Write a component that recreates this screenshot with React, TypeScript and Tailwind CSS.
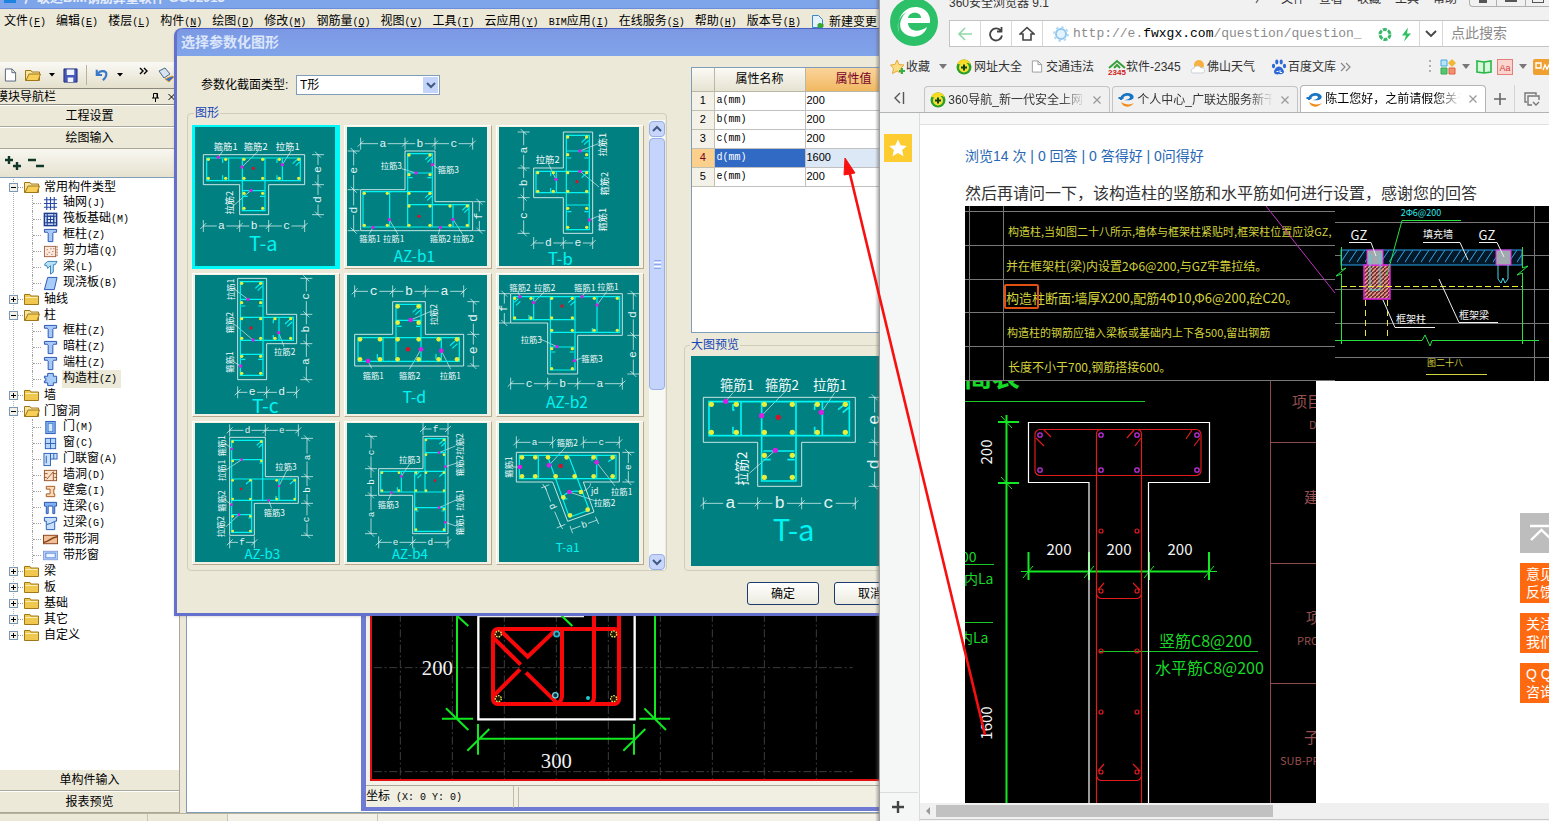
import React from "react";

type Label = [number, number, string, number?];
type Dim = { at: number; stops: number[]; names: string[] };
type Section = {
  name: string;
  view: string;
  outline: string;
  bars: string;
  yellow: number[][];
  pink: number[][];
  red: number[];
  leaders: string;
  labels: Label[];
  h?: Dim[];
  v?: Dim[];
  extra?: string;
  extraLetters?: Label[];
  title: [number, number, number];
  dot?: number;
  labelSize?: number;
  letterSize?: number;
};

const grid = (xs: number[], ys: number[]) => ys.flatMap((y) => xs.map((x) => [x, y]));

const sections: Section[] = [
  {
    name: "T-a",
    view: "45 20 420 417",
    outline: "M70 103H374V193H266V283H179V193H70Z",
    bars: "M80 113H361V181H80ZM146 113V181M187 113V271H255V113M307 113V181M187 211H255M128 116V128M128 165V178M291 116V128M291 165V178M190 228H203M240 228H253M338 130L352 117M347 136L361 123",
    yellow: [...grid([85, 137, 192, 248, 298, 356], [117, 174]), ...grid([192, 248], [219, 264])],
    pink: [[115, 111], [186, 140], [307, 133], [213, 210]],
    red: [220, 144],
    leaders: "M115 111L128 92M186 140L235 92M307 133L333 92M158 258L213 210",
    labels: [[137, 77, "箍筋1"], [227, 77, "箍筋2"], [323, 77, "拉筋1"], [147, 247, "拉筋2", -90]],
    h: [{ at: 317, stops: [70, 179, 266, 374], names: ["a", "b", "c"] }],
    v: [{ at: 414, stops: [103, 193, 283], names: ["e", "d"] }],
    title: [250, 366, 60],
    labelSize: 28,
  },
  {
    name: "AZ-b1",
    view: "501 20 420 417",
    outline: "M675 92H765V244H878V331H542V208H675Z",
    bars: "M549 214H757V320H549ZM629 214V320M683 320V100H757V214M683 158H757M683 253H867V320H757M819 253V320M736 118L750 105M742 126L755 113M736 232L750 219M742 240L755 227M847 270L860 257M853 277L865 265M686 172H698M742 172H754",
    yellow: [...grid([687, 750], [104, 163]), ...grid([553, 622, 687, 750], [219, 315]), ...grid([687, 750, 810, 862], [257]), ...grid([810, 862], [315])],
    pink: [[757, 133], [708, 158], [628, 298], [819, 297], [579, 321], [781, 321]],
    red: [717, 288],
    leaders: "M665 145L708 158M757 133L775 145M579 321L568 340M628 298L654 342M781 321L775 342M819 297L848 342",
    labels: [[634, 135, "拉筋3"], [805, 145, "箍筋3"], [570, 352, "箍筋1"], [641, 352, "拉筋1"], [781, 352, "箍筋2"], [850, 352, "拉筋2"]],
    h: [{ at: 70, stops: [542, 675, 765, 878], names: ["a", "b", "c"] }],
    v: [
      { at: 521, stops: [92, 208, 331], names: ["e", "d"] },
      { at: 898, stops: [244, 331], names: ["f"] },
    ],
    title: [703, 403, 46],
  },
  {
    name: "T-b",
    view: "42 20 420 417",
    outline: "M235 35H323V339H235V232H146V143H235Z",
    bars: "M244 45H313V328H244ZM244 92H313M153 153H313V217H153ZM214 153V217M244 254H313M290 66L304 53M297 73L311 60M290 172L304 159M197 156V168M197 203V215M247 113H259M298 113H310M247 274H259M298 274H310",
    yellow: [...grid([248, 305], [50, 103, 264, 321]), ...grid([158, 205, 248, 305], [157, 213])],
    pink: [[285, 92], [213, 177], [285, 153], [313, 299]],
    red: [276, 184],
    leaders: "M285 92L340 70M190 130L213 177M285 153L342 200M313 299L338 288",
    labels: [[350, 73, "拉筋1", -90], [356, 190, "箍筋2", -90], [350, 298, "箍筋1", -90], [188, 117, "拉筋2"]],
    h: [{ at: 368, stops: [146, 235, 323], names: ["d", "e"] }],
    v: [{ at: 116, stops: [35, 143, 232, 339], names: ["a", "b", "c"] }],
    title: [226, 412, 50],
    labelSize: 28,
  },
  {
    name: "T-c",
    view: "45 465 420 417",
    outline: "M173 475H260V583H350V671H260V779H173Z",
    bars: "M181 485H249V766H181ZM181 538H249M181 592H340V661H181M181 703H249M297 592V661M226 505L240 492M233 512L246 499M315 612L329 599M322 619L336 606M280 598V610M280 645V658M184 558H196M235 558H247M184 718H196M235 718H247",
    yellow: [...grid([185, 242], [490, 548, 709, 760]), ...grid([185, 242, 285, 332], [596, 655])],
    pink: [[204, 538], [296, 638], [219, 660], [182, 738]],
    red: [213, 624],
    leaders: "M160 505L204 538M160 610L219 660M160 725L182 738M296 638L312 680",
    labels: [[149, 508, "拉筋1", -90], [148, 608, "箍筋2", -90], [148, 726, "箍筋1", -90], [314, 693, "拉筋2"]],
    h: [{ at: 817, stops: [173, 260, 350], names: ["e", "d"] }],
    v: [{ at: 379, stops: [475, 583, 671, 779], names: ["c", "b", "a"] }],
    title: [256, 856, 58],
  },
  {
    name: "T-d",
    view: "501 465 420 417",
    outline: "M638 545H736V643H851V738H524V643H638Z",
    bars: "M534 653H838V724H534ZM609 653V724M648 724V553H723V724M648 601H723M784 653V724M698 577L713 563M706 584L720 571M810 677L825 663M817 685L832 671M592 702V718M768 702V718M652 619H665M708 619H720",
    yellow: [...grid([653, 716], [559, 608]), ...grid([540, 600, 653, 716, 776, 831], [658, 718])],
    pink: [[692, 600], [723, 688], [784, 692], [564, 723]],
    red: [684, 688],
    leaders: "M692 600L750 575M564 723L575 745M723 688L688 748M784 692L812 748",
    labels: [[760, 584, "拉筋2", -90], [580, 765, "箍筋1"], [689, 765, "箍筋2"], [811, 765, "拉筋1"]],
    h: [{ at: 514, stops: [524, 638, 736, 851], names: ["c", "b", "a"] }],
    v: [{ at: 880, stops: [545, 643, 738], names: ["d", "e"] }],
    title: [703, 829, 48],
    dot: 6,
    letterSize: 40,
  },
  {
    name: "AZ-b2",
    view: "42 465 420 417",
    outline: "M77 521H412V646H278V762H188V609H77Z",
    bars: "M85 530H404V637H196V750H270V530M85 530V599H270M196 530V637M146 530V599M336 530V637M196 681H270M88 547L100 536M93 556L106 544M250 548L264 536M256 556L269 544M132 585V597M322 624V636M199 696H211M254 696H266",
    yellow: [...grid([89, 138, 200, 262, 328, 397], [535]), ...grid([89, 138, 200, 262], [594]), ...grid([200, 262, 328, 397], [631]), ...grid([200, 262], [686, 746])],
    pink: [[105, 530], [146, 548], [291, 530], [336, 555], [216, 680], [268, 722]],
    red: [231, 558],
    leaders: "M105 530L98 513M146 548L178 515M291 530L302 514M336 555L366 514M168 658L216 680M268 722L290 714",
    labels: [[105, 501, "箍筋2"], [179, 501, "拉筋2"], [299, 501, "箍筋1"], [369, 499, "拉筋1"], [139, 658, "拉筋3"], [321, 714, "箍筋3"]],
    h: [{ at: 791, stops: [77, 188, 278, 412], names: ["c", "b", "a"] }],
    v: [
      { at: 58, stops: [521, 609], names: ["f"] },
      { at: 445, stops: [521, 646, 762], names: ["d", "e"] },
    ],
    title: [246, 845, 47],
  },
  {
    name: "AZ-b3",
    view: "45 39 420 417",
    outline: "M149 82H256V200H355V280H223V376H149Z",
    bars: "M155 91H248V271H155ZM155 149H248M155 207H347V271H155M215 207V367H155V271M297 207V271M155 314H215M230 106L242 95M236 113L247 102M198 222L210 211M330 222L342 211M288 258V270M205 324H213M238 159H246",
    yellow: [...grid([158, 244], [95, 153]), ...grid([158, 211, 290, 344], [211, 267]), ...grid([158, 211], [319, 363])],
    pink: [[156, 117], [185, 149], [155, 284], [177, 314], [297, 228], [266, 271]],
    red: [183, 237],
    leaders: "M136 100L156 117M138 180L185 149M135 270L155 284M138 350L177 314M297 228L320 182M266 271L275 295",
    labels: [[124, 107, "箍筋1", -90], [124, 181, "拉筋1", -90], [122, 273, "箍筋2", -90], [120, 350, "拉筋2", -90], [318, 169, "拉筋3"], [283, 306, "箍筋3"]],
    h: [
      { at: 61, stops: [149, 256, 355], names: ["d", "e"] },
      { at: 397, stops: [149, 223], names: ["f"] },
    ],
    v: [{ at: 381, stops: [85, 200, 280, 376], names: ["a", "b", "c"] }],
    title: [247, 431, 40],
    dot: 3,
    letterSize: 28,
  },
  {
    name: "AZ-b4",
    view: "501 39 420 417",
    outline: "M729 79H804V371H698V256H596V176H729Z",
    bars: "M735 246V86H796V246M735 128H796M602 184H796V246H602ZM664 184V246M704 184V364H796V246M704 293H796M778 102L790 91M784 109L795 98M707 196L718 186M712 204L724 193M778 200L790 189M652 232V244M708 303H716M784 303H792",
    yellow: [...grid([738, 792], [90, 134]), ...grid([606, 657, 708, 738, 792], [188, 242]), ...grid([708, 792], [298, 359])],
    pink: [[664, 199], [777, 128], [796, 170], [777, 293], [796, 337], [635, 248]],
    red: [765, 212],
    leaders: "M664 199L690 160M777 128L826 108M796 170L828 160M777 293L828 270M796 337L828 348M635 248L625 270",
    labels: [[836, 102, "拉筋2", -90], [838, 167, "箍筋2", -90], [838, 270, "拉筋1", -90], [838, 344, "箍筋1", -90], [689, 147, "拉筋3"], [625, 283, "箍筋3"]],
    h: [
      { at: 57, stops: [729, 804], names: ["f"] },
      { at: 397, stops: [596, 698, 804], names: ["e", "d"] },
    ],
    v: [{ at: 573, stops: [79, 176, 256, 371], names: ["c", "b", "a"] }],
    title: [690, 431, 40],
    dot: 3,
    letterSize: 28,
  },
  {
    name: "T-a1",
    view: "957 39 420 417",
    outline: "M1009 127H1318V216H1210L1242 306L1163 334L1118 216H1009Z",
    bars: "M1018 136H1308V206H1018ZM1075 136V206M1104 142L1168 322L1228 300L1165 136M1250 136V206M1146 262Q1166 238 1205 245M1060 194V206M1236 140V152M1150 268L1162 266M1285 155L1300 143",
    yellow: [...grid([1026, 1066, 1104, 1160, 1241, 1298], [142]), ...grid([1026, 1066, 1127, 1184, 1241, 1298], [199]), [1150, 262], [1203, 246], [1170, 316], [1223, 299]],
    pink: [[1020, 171], [1107, 166], [1250, 157], [1168, 246]],
    red: [1142, 168],
    leaders: "M998 171H1020M1107 166L1160 108M1250 157L1305 228M1168 246L1244 272M1212 242Q1230 236 1232 220",
    labels: [[984, 171, "箍筋1", -90], [1162, 95, "箍筋2"], [1325, 243, "拉筋1"], [1274, 275, "拉筋2"], [1244, 239, "jd"]],
    h: [
      { at: 97, stops: [1009, 1118], names: ["a"] },
      { at: 97, stops: [1210, 1318], names: ["c"] },
    ],
    v: [{ at: 1345, stops: [127, 216], names: ["e"] }],
    extra: "M1095 230L1112 275M1124 305L1143 349M1083 234L1108 224M1130 354L1156 343M1175 358L1202 348M1224 340L1252 330M1170 348L1178 370M1246 320L1256 342M1088 222L1100 240M1138 340L1148 357",
    extraLetters: [[1117, 290, "d", 68], [1213, 345, "b", -18]],
    title: [1163, 409, 36],
    dot: 6,
    letterSize: 28,
  },
];

const preview: Section = {
  name: "T-a",
  view: "33 78 630 630",
  outline: "M70 202H526V337H365V469H233V337H70Z",
  bars: "M87 215H508V317H87ZM183 215V317M245 215V453H348V215M427 215V317M250 363H343M159 222V240H164M159 290V312M404 222V240M404 290V312M250 389H272M322 389H344M474 239L498 220M488 248L508 231",
  yellow: [...grid([94, 169, 253, 337, 412, 496], [223, 307]), ...grid([253, 337], [376, 442])],
  pink: [[137, 214], [245, 257], [424, 247], [286, 361]],
  red: [295, 262],
  leaders: "M137 214L160 187M245 257L315 185M424 247L465 187M208 430L286 361",
  labels: [[171, 162, "箍筋1"], [306, 162, "箍筋2"], [450, 162, "拉筋1"], [186, 416, "拉筋2", -90]],
  h: [{ at: 520, stops: [70, 233, 365, 526], names: ["a", "b", "c"] }],
  v: [{ at: 584, stops: [202, 337, 469], names: ["e", "d"] }],
  title: [341, 594, 88],
  dot: 7,
  labelSize: 40,
  letterSize: 52,
};

function dimPath(d: Dim, vertical: boolean, gap: number) {
  const p = (a: number, b: number) => (vertical ? `${b} ${a}` : `${a} ${b}`);
  let out = "";
  d.stops.forEach((s, i) => {
    out += `M${p(s, d.at - 18)}L${p(s, d.at + 18)}`;
    out += vertical ? `M${d.at - 9} ${s - 9}L${d.at + 9} ${s + 9}` : `M${s - 9} ${d.at + 9}L${s + 9} ${d.at - 9}`;
    if (i < d.stops.length - 1) {
      const n = d.stops[i + 1];
      const m = (s + n) / 2;
      out += `M${p(s, d.at)}L${p(m - gap, d.at)}M${p(m + gap, d.at)}L${p(n, d.at)}`;
    }
  });
  return out;
}

function SvgText({ l, size, fill, mono }: { l: Label; size: number; fill: string; mono?: boolean }) {
  const [x, y, t, r] = l;
  return (
    <text
      x={x}
      y={y}
      fontSize={size}
      fill={fill}
      textAnchor="middle"
      dominantBaseline="central"
      fontFamily={mono ? '"Liberation Mono", monospace' : '"Noto Sans CJK SC", sans-serif'}
      transform={r ? `rotate(${r} ${x} ${y})` : undefined}
    >
      {t}
    </text>
  );
}

function SectionDrawing({ s, className }: { s: Section; className: string }) {
  const ls = s.letterSize ?? 34;
  const dot = s.dot ?? 4;
  return (
    <svg viewBox={s.view} className={className} role="img" aria-label={s.name}>
      <g fill="none" stroke="#e4f4f4" strokeWidth="2.6">
        <path d={s.outline} />
        <path d={s.leaders} strokeWidth="2" />
        {s.h?.map((d, i) => <path key={i} d={dimPath(d, false, ls * 0.42)} strokeWidth="2.2" />)}
        {s.v?.map((d, i) => <path key={i} d={dimPath(d, true, ls * 0.42)} strokeWidth="2.2" />)}
        {s.extra && <path d={s.extra} strokeWidth="2.2" />}
      </g>
      <path d={s.bars} fill="none" stroke="#00f4f4" strokeWidth={s.dot === 7 ? 5 : 3.6} />
      {s.yellow.map(([x, y], i) => <circle key={i} cx={x} cy={y} r={dot + 1} fill="#e6f03c" />)}
      {s.pink.map(([x, y], i) => <circle key={i} cx={x} cy={y} r={dot + 1} fill="#d81ee6" />)}
      <circle cx={s.red[0]} cy={s.red[1]} r={dot + 1} fill="#d0142c" />
      {s.labels.map((l, i) => <SvgText key={i} l={l} size={s.labelSize ?? 25} fill="#f2fbfb" />)}
      {s.h?.map((d) => d.names.map((n, i) => <SvgText key={n + i} l={[(d.stops[i] + d.stops[i + 1]) / 2, d.at, n]} size={ls} fill="#e4f4f4" mono />))}
      {s.v?.map((d) => d.names.map((n, i) => <SvgText key={n + i} l={[d.at, (d.stops[i] + d.stops[i + 1]) / 2, n, -90]} size={ls} fill="#e4f4f4" mono />))}
      {s.extraLetters?.map((l, i) => <SvgText key={i} l={l} size={ls} fill="#e4f4f4" mono />)}
      <SvgText l={[s.title[0], s.title[1], s.name]} size={s.title[2]} fill="#00f4f4" />
    </svg>
  );
}

/* ---------- small icons ---------- */

function Folder({ open }: { open?: boolean }) {
  return (
    <svg viewBox="0 0 16 14" className="h-[14px] w-4 shrink-0">
      <path d="M0.500 2.500h5.500l1 1.500h7.500v8.500H0.500z" fill={open ? "#f6e3a0" : "#f0c850"} stroke="#a07818" />
      {open ? <path d="M1 12.500L4 6h11.500L13 12.500z" fill="#f8cf58" stroke="#a07818" /> : <path d="M1.500 5.500h12" stroke="#fff2b8" />}
    </svg>
  );
}

const glyphs: Record<string, React.ReactNode> = {
  grid: <path d="M1 4h14M1 8h14M1 12h14M4 1v14M8 1v14M12 1v14" stroke="#2848a8" strokeWidth="1.200" />,
  raft: (
    <g fill="none" stroke="#1c3c90">
      <rect x="1.500" y="1.500" width="13" height="13" fill="#dce8fc" strokeWidth="1.600" />
      <rect x="4.500" y="4.500" width="7" height="7" />
      <path d="M1 4.500h14M1 11.500h14M4.500 1v14M11.500 1v14M8 4v8M4 8h8" />
    </g>
  ),
  column: <path d="M1.500 1.500h13v3h-3l-1 1v9h-5v-9l-1-1h-3z" fill="#a8c8f8" stroke="#2450b0" />,
  wall: (
    <g>
      <rect x="1.500" y="2.500" width="12" height="11" fill="#fbe8dc" stroke="#a06040" />
      <path d="M4 6h1M8 5h1M6 9h1M10 8h1M4 11h1M9 11h1M11 5h1" stroke="#a05028" />
      <path d="M15 2v12" stroke="#a05028" strokeDasharray="2 1" />
    </g>
  ),
  beam: <path d="M2 4l3-2.500h10l-2 3.500h-2v8l-3 2V6l-3 3-1-3H2z" fill="#b8e0f4" stroke="#3480b8" />,
  slab: <path d="M5 1.500h10l-3 13H1.500z" fill="#a8ccf8" stroke="#2450b0" />,
  tie: <path d="M5 1.500h6v3h3.500v7H11v3H5v-3H1.500v-2H3v-3H1.500v-2H5z" fill="#a8ccf8" stroke="#2450b0" />,
  door: (
    <g>
      <rect x="3" y="1.500" width="10" height="13" fill="#88b8f4" stroke="#2458b8" />
      <rect x="5.500" y="3.500" width="5" height="9" fill="#d4e8fc" stroke="#4880d0" />
    </g>
  ),
  window: (
    <g>
      <rect x="2.500" y="2.500" width="11" height="11" fill="#b8d8fc" stroke="#2c60b8" />
      <path d="M8 2v12M2 8h12" stroke="#2c60b8" />
    </g>
  ),
  doorwin: (
    <g stroke="#2c60b8" fill="#c8e0fc">
      <rect x="1" y="1.500" width="7" height="13" />
      <rect x="8" y="1.500" width="7" height="6" />
      <path d="M11.500 1.500v6M3.500 4v8" />
    </g>
  ),
  hole: (
    <g>
      <rect x="1.500" y="2.500" width="13" height="11" fill="#fbe4cc" stroke="#98522c" />
      <path d="M1 6h4M11 6h4M1 10h3M12 10h3M4 12l7-8v9" stroke="#98522c" fill="none" />
    </g>
  ),
  niche: <path d="M3.500 2.500h9v3h-1v5h1v3h-9v-3h4v-5h-4z" fill="#fbd8b0" stroke="#a05828" />,
  link: <path d="M1.500 2.500h13v4h-2v8h-2v-8h-5v8h-2v-8h-2z" fill="#80b0f0" stroke="#2450b0" />,
  lintel: (
    <g>
      <path d="M1.500 1.500h13v4h-2v9h-9v-9h-2z" fill="#c8e0fc" stroke="#2458b8" />
      <path d="M4 9l4-1 4-2" stroke="#2458b8" fill="none" />
    </g>
  ),
  striphole: (
    <g>
      <rect x="0.500" y="3.500" width="15" height="9" fill="#f0c098" stroke="#884018" />
      <path d="M1 11c5 0 7-5 14-6" stroke="#884018" strokeWidth="1.500" fill="none" />
    </g>
  ),
  stripwin: (
    <g>
      <rect x="0.500" y="3.500" width="15" height="9" fill="#b8d0f8" stroke="#88a0e0" />
      <rect x="3" y="5.500" width="10" height="5" fill="#eef4ff" stroke="#5888d8" />
    </g>
  ),
};

function TreeGlyph({ name }: { name: string }) {
  return <svg viewBox="0 0 16 16" className="h-[15px] w-[15px] shrink-0">{glyphs[name]}</svg>;
}

/* Chinese caption followed by its half-width access key */
function Caption({ text, hot, underline }: { text: string; hot?: string; underline?: boolean }) {
  return (
    <span className="whitespace-pre">
      {text}
      {hot && (
        <span className="font-['Liberation_Mono',monospace] text-[10px]">
          (<span className={underline ? "underline" : ""}>{hot}</span>)
        </span>
      )}
    </span>
  );
}

const menus: [string, string][] = [
  ["文件", "F"], ["编辑", "E"], ["楼层", "L"], ["构件", "N"], ["绘图", "D"], ["修改", "M"], ["钢筋量", "Q"],
  ["视图", "V"], ["工具", "T"], ["云应用", "Y"], ["BIM应用", "I"], ["在线服务", "S"], ["帮助", "H"], ["版本号", "B"],
];

type Node = { text: string; open?: boolean; items?: [string, string, string][] };
const tree: Node[] = [
  {
    text: "常用构件类型", open: true,
    items: [["grid", "轴网", "J"], ["raft", "筏板基础", "M"], ["column", "框柱", "Z"], ["wall", "剪力墙", "Q"], ["beam", "梁", "L"], ["slab", "现浇板", "B"]],
  },
  { text: "轴线" },
  { text: "柱", open: true, items: [["column", "框柱", "Z"], ["column", "暗柱", "Z"], ["column", "端柱", "Z"], ["tie", "构造柱", "Z"]] },
  { text: "墙" },
  {
    text: "门窗洞", open: true,
    items: [["door", "门", "M"], ["window", "窗", "C"], ["doorwin", "门联窗", "A"], ["hole", "墙洞", "D"], ["niche", "壁龛", "I"], ["link", "连梁", "G"], ["lintel", "过梁", "G"], ["striphole", "带形洞", ""], ["stripwin", "带形窗", ""]],
  },
  { text: "梁" }, { text: "板" }, { text: "基础" }, { text: "其它" }, { text: "自定义" },
];

function Tree() {
  return (
    <ul className="flex-1 border-t border-[#7f9db9] bg-white pt-px pl-[9px]">
      {tree.map((n, i) => (
        <li key={n.text} className={i < tree.length - 1 ? "bg-[linear-gradient(to_bottom,#b0b0b0_50%,transparent_50%)] bg-[length:1px_2px] bg-[position:4px_0] bg-repeat-y" : ""}>
          <div className="flex h-4 items-center">
            <button aria-label={n.text} className="flex h-[9px] w-[9px] items-center justify-center border border-[#7898b5] bg-[#f4f2e8]">
              <svg viewBox="0 0 7 7" className="h-[7px] w-[7px]">
                <path d={n.open ? "M1 3.500h5" : "M1 3.500h5M3.500 1v5"} stroke="#000" />
              </svg>
            </button>
            <span className="mr-px w-[5px] border-t border-dotted border-[#a0a0a0]" />
            <Folder open={n.open} />
            <span className="pl-1">{n.text}</span>
          </div>
          {n.items && (
            <ul className="ml-[23px]">
              {n.items.map(([g, t, k], j) => (
                <li key={j} className="flex h-4 items-center border-l border-dotted border-[#a0a0a0]">
                  <span className="mr-0.5 w-2 border-t border-dotted border-[#a0a0a0]" />
                  <TreeGlyph name={g} />
                  <span className={g === "tie" ? "ml-1 bg-[#ece9d8] px-px pr-1 leading-4" : "ml-1 pl-px leading-4"}>
                    <Caption text={t} hot={k || undefined} />
                  </span>
                </li>
              ))}
            </ul>
          )}
        </li>
      ))}
    </ul>
  );
}

const navButton = "h-[22px] w-full border-t border-b border-t-white border-b-[#aca899] bg-[#ece9d8] text-center leading-5";

function Sidebar() {
  return (
    <aside className="flex w-[180px] shrink-0 flex-col border-r border-[#aca899]">
      <div className="flex h-[26px] items-center gap-1 bg-gradient-to-b from-[#faf9f5] to-[#e4e0cc] pl-1">
        <svg viewBox="0 0 14 16" className="h-4 w-[13px]"><path d="M1.500 1.500h7l4 4v9h-11z" fill="#fff" stroke="#506078" /><path d="M8.500 1.500v4h4" fill="none" stroke="#506078" /></svg>
        <span className="ml-1"><Folder open /></span>
        <svg viewBox="0 0 6 4" className="ml-1 h-1 w-[6px]"><path d="M0 0h6L3 3.500z" /></svg>
        <svg viewBox="0 0 16 16" className="ml-1 h-[15px] w-[15px]"><path d="M1 1h14v14H1z" fill="#4858b8" stroke="#202c78" /><path d="M4 1.500h8v6H4zM5 10h6v5H5z" fill="#f0f4ff" /></svg>
        <span className="mx-1 h-5 w-px bg-[#b8b49c]" />
        <svg viewBox="0 0 16 16" className="h-[14px] w-[14px]"><path d="M2 2v6h6" fill="none" stroke="#3878c8" strokeWidth="2.400" /><path d="M3 7c3-5 10-4 10 0 0 3-2 5-4 7" fill="none" stroke="#3878c8" strokeWidth="2.400" /></svg>
        <svg viewBox="0 0 6 4" className="ml-1 h-1 w-[6px]"><path d="M0 0h6L3 3.500z" /></svg>
        <svg viewBox="0 0 10 8" className="mb-2 ml-3 h-2 w-[10px]"><path d="M1 1l3 3-3 3M5 1l3 3-3 3" fill="none" stroke="#000" strokeWidth="1.400" /></svg>
        <svg viewBox="0 0 18 18" className="ml-1 h-[18px] w-[18px] shrink-0"><path d="M2 5l6-3 5 6-6 4z" fill="#d8e4f0" stroke="#486888" /><path d="M8 13l4 3 5-5-2-1z" fill="#3870d0" stroke="#e0a030" /></svg>
      </div>
      <div className="flex h-[17px] items-center overflow-hidden border-t border-b border-[#8a887a]">
        <span className="-ml-1 flex-1">模块导航栏</span>
        <svg viewBox="0 0 24 10" className="mr-1 h-[10px] w-6"><path d="M1 6h7M2.500 6V1.500h4V6M4.500 6v4M6 1.500V6" fill="none" stroke="#000" /><path d="M17.500 2l6 6M23.500 2l-6 6" stroke="#000" /></svg>
      </div>
      <button className={navButton}>工程设置</button>
      <button className={navButton}>绘图输入</button>
      <div className="flex h-7 items-center gap-[7px] bg-gradient-to-b from-[#f8f7f0] to-[#e6e2d0] pl-[5px]">
        <svg viewBox="0 0 16 16" className="h-4 w-4"><path d="M0 5h8M4 1v8M8 11h8M12 7v8" stroke="#103828" strokeWidth="2.400" /></svg>
        <svg viewBox="0 0 16 16" className="h-4 w-4"><path d="M0 5h8M8 11h8" stroke="#103828" strokeWidth="2.400" /></svg>
      </div>
      <Tree />
      <button className={navButton}>单构件输入</button>
      <button className={navButton}>报表预览</button>
    </aside>
  );
}

function CadWindow() {
  const bolts = [[415, 102], [761, 102], [415, 296], [761, 296]];
  return (
    <section className="absolute right-0 bottom-[10px] left-[361px] flex flex-col border-b-4 border-l-[5px] border-[#6f7bd2] bg-[#f4f2e8]">
      <div className="ml-1 border-b-2 border-l-2 border-[#e01010] bg-black">
        <svg viewBox="36 0 1560 537" className="block h-[179px] w-[520px]">
          <path d="M121 42V537M277 42V537M433 42V537M589 42V537M745 42V537M901 42V537M1057 42V537M1213 42V537M1369 42V537M42 203H1478M42 515H1478" stroke="#3c3c3c" strokeWidth="3" strokeDasharray="24 8 6 8" />
          <path d="M355 40V358H824V40M355 48H672" fill="none" stroke="#fff" strokeWidth="7" />
          <path d="M291 40V356M246 356H339M258 325L325 390M291 47L325 78M605 47L637 78M885 40V356M838 356H930M853 325L918 390M354 416H822M354 372V464M822 372V464M322 452L388 387M790 452L856 387" fill="none" stroke="#10e820" strokeWidth="6" />
          <g fill="none" stroke="#f80808" strokeWidth="12">
            <rect x="399" y="87" width="378" height="225" rx="14" />
            <path d="M777 40V100M702 40V290Q702 306 690 312M606 87V290Q604 304 592 312M590 87L503 170L420 90M399 112L482 194M480 208L402 286M498 218L590 308" />
          </g>
          {bolts.map(([x, y], i) => <circle key={i} cx={x} cy={y} r="9" fill="#201800" stroke="#e8e060" strokeWidth="4" strokeDasharray="5 3" />)}
          <circle cx="590" cy="102" r="8" fill="#083840" stroke="#28b8d0" strokeWidth="5" />
          <circle cx="586" cy="286" r="8" fill="#083840" stroke="#70d0e0" strokeWidth="4" />
          <circle cx="684" cy="294" r="6" fill="#28c8c8" />
          <g fill="#f0f0f0" fontSize="62" fontFamily='"Liberation Serif", serif' textAnchor="middle">
            <text x="232" y="226">200</text>
            <text x="589" y="504">300</text>
          </g>
        </svg>
      </div>
      <div className="mt-1 flex h-[22px] items-center border-t border-[#aca899] bg-[#f1efe2]">
        <span className="w-[148px] border-r border-[#c0bca8] whitespace-pre leading-5">
          坐标<span className="font-['Liberation_Mono',monospace] text-[10px]"> (X: 0 Y: 0)</span>
        </span>
        <span className="ml-1 h-5 border-l border-[#c0bca8]" />
      </div>
    </section>
  );
}

const params: [string, string][] = [["a(mm)", "200"], ["b(mm)", "200"], ["c(mm)", "200"], ["d(mm)", "1600"], ["e(mm)", "200"]];

function ScrollButton({ up }: { up?: boolean }) {
  return (
    <button aria-label={up ? "向上" : "向下"} className="flex h-4 w-4 shrink-0 items-center justify-center rounded-sm border border-[#98b0e8] bg-[#c8d6fb]">
      <svg viewBox="0 0 10 8" className="h-2 w-[10px]"><path d={up ? "M1 6l4-4 4 4" : "M1 2l4 4 4-4"} fill="none" stroke="#405884" strokeWidth="2" /></svg>
    </button>
  );
}

function ParamTable() {
  return (
    <div className="ml-[7px] h-[266px] border border-[#7f9db9] bg-white">
      <table className="w-full table-fixed border-collapse">
        <thead>
          <tr className="h-[23px] bg-gradient-to-b from-[#fbfaf4] to-[#e6e3d2]">
            <th className="w-[22px] border-r border-b border-[#b8b8a8]" />
            <th className="w-[91px] border-r border-b border-[#b8b8a8] font-normal">属性名称</th>
            <th className="border-b border-[#b8b8a8] bg-gradient-to-b from-[#fbd49a] to-[#f0b860] pl-[30px] text-left font-normal text-[#780028]">属性值</th>
          </tr>
        </thead>
        <tbody className="text-[11px]">
          {params.map(([n, v], i) => {
            const on = i === 3;
            return (
              <tr key={n} className="h-[19px]">
                <td className={on ? "border-r border-b border-[#c0c0b0] bg-[#fbd08c] text-center text-[#780028]" : "border-r border-b border-[#c0c0b0] bg-[#f4f2e8] text-center"}>{i + 1}</td>
                <td className={on ? "border-r border-b border-[#c0c0c0] bg-[#316ac5] pl-0.5 font-['Liberation_Mono',monospace] text-[10px] text-white" : "border-r border-b border-[#c0c0c0] pl-0.5 font-['Liberation_Mono',monospace] text-[10px]"}>{n}</td>
                <td className={on ? "border-b border-[#c0c0c0] bg-[#dde8f6] pl-px" : "border-b border-[#c0c0c0] pl-px"}>{v}</td>
              </tr>
            );
          })}
        </tbody>
      </table>
    </div>
  );
}

const pushButton = "h-[23px] w-[72px] rounded-[3px] border border-[#1c3c70] bg-gradient-to-b from-white to-[#eceade] leading-5";

function Dialog() {
  return (
    <section className="absolute top-7 left-[174px] w-[770px] rounded-tl-lg border-b-[3px] border-l-[3px] border-[#6470cc] bg-[#ece9d8] shadow-sm">
      <h1 className="flex h-7 items-center rounded-tl-md border-t border-[#4c62c4] bg-gradient-to-b from-[#7c98e4] to-[#80a4ea] pl-1 text-[14px] font-bold text-[#dce6fa]">
        选择参数化图形
      </h1>
      <div className="flex gap-[17px] pt-[11px] pl-[10px]">
        <div className="w-[480px] shrink-0 pt-2">
          <div className="flex h-5 items-center pl-[14px]">
            <label htmlFor="kind" className="w-[95px]">参数化截面类型:</label>
            <div className="relative flex h-5 w-[144px] border border-[#7f9db9] bg-white">
              <select id="kind" defaultValue="T" className="w-full appearance-none bg-transparent pl-[3px] leading-4 outline-none">
                <option value="T">T形</option>
              </select>
              <span className="pointer-events-none absolute top-px right-px flex h-4 w-[15px] items-center justify-center bg-[#c4d4fa]">
                <svg viewBox="0 0 10 8" className="h-2 w-[10px]"><path d="M1 2l4 4 4-4" fill="none" stroke="#405884" strokeWidth="2" /></svg>
              </span>
            </div>
          </div>
          <fieldset className="mt-[11px] h-[465px] rounded border border-[#d0cebb]">
            <legend className="ml-[6px] px-px leading-[14px] text-[#1446b4]">图形</legend>
            <div className="flex h-[450px] gap-[5px] overflow-hidden pl-1">
              <div className="grid grid-cols-[148px_148px_148px] content-start gap-1 pt-[5px]">
                {sections.map((s, i) => (
                  <button
                    key={s.name}
                    className={i === 0 ? "h-36 bg-[#00fafa] pt-0.5 pr-[5px] pb-[3px] pl-[3px]" : "h-36 border-t border-r border-b border-l border-t-white border-r-[#b8a890] border-b-[#b8a890] border-l-white bg-[#f3f0e4] pt-px pr-1 pb-0.5 pl-0.5"}
                  >
                    <SectionDrawing s={s} className="block h-[139px] w-[140px] bg-[#008080]" />
                  </button>
                ))}
              </div>
              <div className="flex w-4 flex-col bg-[#f8f8f4] pt-px">
                <ScrollButton up />
                <div className="mt-px flex h-[252px] flex-col items-center justify-center gap-px rounded-sm border border-[#98b0e8] bg-[#c4d4fc]">
                  <span className="h-px w-[7px] bg-[#8ca8ee]" />
                  <span className="h-px w-[7px] bg-white" />
                  <span className="h-px w-[7px] bg-[#8ca8ee]" />
                  <span className="h-px w-[7px] bg-white" />
                  <span className="h-px w-[7px] bg-[#8ca8ee]" />
                </div>
                <div className="flex-1" />
                <ScrollButton />
              </div>
            </div>
          </fieldset>
        </div>
        <div className="min-w-0 flex-1 pb-2">
          <ParamTable />
          <fieldset className="mt-[5px] h-[233px] rounded border border-[#d0cebb]">
            <legend className="ml-[5px] px-px leading-[14px] text-[#1446b4]">大图预览</legend>
            <div className="mt-1 ml-[6px] bg-[#008080]">
              <SectionDrawing s={preview} className="block h-[210px] w-[210px]" />
            </div>
          </fieldset>
          <div className="mt-[11px] flex gap-[15px] pl-[63px]">
            <button className={pushButton}>确定</button>
            <button className={pushButton}>取消</button>
          </div>
        </div>
      </div>
    </section>
  );
}

function Estimator() {
  return (
    <main className="relative flex min-w-0 flex-col overflow-hidden bg-[#ece9d8]">
      <div className="flex h-[9px] shrink-0 items-end overflow-hidden border-b border-[#6c8cdc] bg-[#7ea4ea] pl-1">
        <span className="mr-2 mb-[5px] h-2 w-3 shrink-0 bg-[#1c84e0]" />
        <span className="mb-1 text-[13px] leading-[13px] font-bold whitespace-pre text-[#e4ecfc]">广联达BIM钢筋算量软件 GGJ2013</span>
      </div>
      <nav className="flex h-[25px] shrink-0 items-center gap-[10px] overflow-hidden pl-1">
        {menus.map(([t, k]) => (
          <button key={t} className="shrink-0">
            {t.startsWith("BIM") ? (
              <>
                <span className="font-['Liberation_Mono',monospace] text-[10px]">BIM</span>
                <Caption text={t.slice(3)} hot={k} underline />
              </>
            ) : (
              <Caption text={t} hot={k} underline />
            )}
          </button>
        ))}
        <button className="flex shrink-0 items-center gap-1">
          <svg viewBox="0 0 14 15" className="h-[15px] w-[14px]">
            <path d="M1.500 1.500h6l4 4v8h-10z" fill="#e4f2fc" stroke="#3888c8" />
            <path d="M9 9v5M6.500 11.500h6" stroke="#38a830" strokeWidth="3" />
          </svg>
          新建变更
        </button>
      </nav>
      <div className="flex flex-1 pt-7">
        <Sidebar />
        <div className="flex flex-1 pl-[6px]">
          <div className="flex-1 border-b border-l border-[#7f9db9] bg-white" />
        </div>
      </div>
      <div className="flex h-2 shrink-0 border-t border-[#b8b49c]">
        <span className="w-[148px] border-r border-[#c8c4b0]" />
        <span className="w-20 border-r border-[#c8c4b0]" />
        <span className="w-[150px] border-r border-[#c8c4b0] bg-[#f4f2e8]" />
        <span className="flex-1 bg-[#f4f2e8]" />
      </div>
      <CadWindow />
      <Dialog />
      <div className="absolute top-0 right-0 bottom-0 w-1 bg-gradient-to-r from-transparent to-[#606060]/50" />
    </main>
  );
}

/* ---------- browser ---------- */

function PlusBadge() {
  return (
    <svg viewBox="0 0 16 16" className="h-4 w-4 shrink-0">
      <circle cx="8" cy="8" r="7.500" fill="#28a028" />
      <path d="M1 5C4-1 13-1 15 6c-3-3-5-2-6 0z" fill="#f8d820" />
      <circle cx="8" cy="8.500" r="5" fill="#f4e030" />
      <path d="M8 5.500v6M5 8.500h6" stroke="#104010" strokeWidth="2" />
    </svg>
  );
}

function ESwirl() {
  return (
    <svg viewBox="0 0 17 17" className="h-[17px] w-[17px] shrink-0">
      <path d="M2 9C2 1 13 0 15.500 5c1 4-4 5-9.500 4 3 0 6-1 6-3-1-2-7-2-8 3z" fill="#1874c4" />
      <path d="M3 11c2 6 9 6 13 1-3 2-9 2-13-1z" fill="#f08c18" />
      <path d="M0.500 7l5 0" stroke="#1874c4" strokeWidth="2" />
    </svg>
  );
}

function Tab({ icon, title, active }: { icon: React.ReactNode; title: string; active?: boolean }) {
  return (
    <div className={active ? "flex h-[27px] w-[186px] items-center rounded-t border border-b-0 border-[#b4b4b4] bg-white pr-1 pl-[5px] text-black" : "flex h-[26px] w-[186px] items-center rounded-t border border-b-0 border-[#c4c4c4] bg-[#f0f0f0] pr-1 pl-[5px] text-[#333]"}>
      {icon}
      <button className="ml-0.5 flex-1 overflow-hidden [mask-image:linear-gradient(to_right,#000_82%,transparent)] text-left whitespace-nowrap">{title}</button>
      <button aria-label="关闭" className="ml-1 w-4 shrink-0">
        <svg viewBox="0 0 8 8" className="mx-auto h-2 w-2"><path d="M0.500 0.500l7 7M7.500 0.500l-7 7" stroke="#999" strokeWidth="1.200" /></svg>
      </button>
    </div>
  );
}

function NotesDrawing() {
  const notes: [number, number, number, string][] = [
    [1008, 231, 11, "构造柱,当如图二十八所示,墙体与框架柱紧贴时,框架柱位置应设GZ,"],
    [1006, 265, 12, "并在框架柱(梁)内设置2Φ6@200,与GZ牢靠拉结。"],
    [1006, 297, 13, "构造柱断面:墙厚X200,配筋4Φ10,Φ6@200,砼C20。"],
    [1007, 332, 11, "构造柱的钢筋应锚入梁板或基础内上下各500,留出钢筋"],
    [1008, 366, 12, "长度不小于700,钢筋搭接600。"],
  ];
  return (
    <svg viewBox="965 206 584 175" className="block h-[175px] w-[584px] max-w-none shrink-0 bg-black" fontFamily='"Noto Sans CJK SC", sans-serif'>
      <defs>
        <pattern id="wall" width="8" height="15" patternUnits="userSpaceOnUse" x="1341" y="250">
          <rect width="8" height="15" fill="#041828" />
          <path d="M-2 15L8 0" stroke="#30a8e8" />
        </pattern>
        <pattern id="conc" width="4" height="4" patternUnits="userSpaceOnUse">
          <rect width="4" height="4" fill="#6c3030" />
          <path d="M0 4L4 0" stroke="#f0a090" strokeWidth="1.400" />
        </pattern>
      </defs>
      <path d="M965 211.500H1335M965 245.500H1335M965 279.500H1335M965 312.500H1335M965 346.500H1335M965 380.500H1335M969.500 206V381M1003.500 206V381M1335 222.500H1549M1335 255.500H1549M1335 289.500H1549M1335 323.500H1549M1335 357.500H1549M1534.500 206V381" stroke="#787878" fill="none" />
      {notes.map(([x, y, size, t]) => <text key={y} x={x} y={y} fontSize={size} fill="#d2d23c" dominantBaseline="central">{t}</text>)}
      <rect x="1005" y="285" width="33" height="23" rx="1" fill="none" stroke="#e05010" strokeWidth="2" />
      <path d="M1266 206L1335 293" stroke="#c030c0" />
      <rect x="1341" y="250" width="181" height="15" fill="url(#wall)" stroke="#28a0e8" />
      <rect x="1364" y="265" width="26" height="34" fill="url(#conc)" stroke="#e020e0" strokeWidth="1.500" />
      <rect x="1367" y="250" width="16" height="15" fill="#a0a8b0" stroke="#e020e0" />
      <rect x="1496" y="250" width="15" height="15" fill="#a0a8b0" stroke="#e020e0" />
      <path d="M1370 254V290H1380V254M1498 265V279L1501 283L1503 278L1505 283L1508 279V265" fill="none" stroke="#40d8e8" />
      <path d="M1341.500 247V270L1346 268L1336 276L1341.500 274V344M1522.500 247V268L1528 266L1517 275L1522.500 273V344M1335 340.500H1422L1425 335L1430 346L1432 340.500H1539M1461 220.500H1402L1387 275" fill="none" stroke="#28e040" />
      <path d="M1341 286.500H1522" stroke="#e8e838" strokeDasharray="6 3" />
      <path d="M1365.500 300V340M1387.500 300V340" stroke="#e8e838" strokeDasharray="6 4" />
      <path d="M1349 242.500H1371L1376 256M1423 242.500H1460L1468 260M1479 242.500H1497L1504 257M1435 327.500H1395L1383 300M1498 322.500H1459L1439 279" fill="none" stroke="#f0f0f0" />
      <g fill="#f4f4f4" textAnchor="middle" dominantBaseline="central">
        <text x="1359" y="234" fontSize="13">GZ</text>
        <text x="1438" y="233" fontSize="10">填充墙</text>
        <text x="1487" y="234" fontSize="13">GZ</text>
        <text x="1411" y="318" fontSize="10">框架柱</text>
        <text x="1474" y="314" fontSize="10">框架梁</text>
      </g>
      <text x="1421" y="212" fontSize="9" fill="#30e8e8" textAnchor="middle" dominantBaseline="central">2Φ6@200</text>
      <text x="1445" y="362" fontSize="9" fill="#d2d23c" textAnchor="middle" dominantBaseline="central">图二十八</text>
      <path d="M1426 374.500H1487" stroke="#d2d23c" />
    </svg>
  );
}

function DetailDrawing() {
  return (
    <svg viewBox="965 381 351 422" className="block h-[422px] w-[351px] shrink-0 bg-black" fontFamily='"Noto Sans CJK SC", sans-serif'>
      <text x="964" y="387" fontSize="28" fontWeight="700" fill="#18d828">简表</text>
      <path d="M965 401.500H1145M965 564.500H994M965 622.500H993M1099 651.500H1258" stroke="#18c828" />
      <path d="M1006.500 415V803" stroke="#14e824" strokeWidth="2" />
      <path d="M998 422H1019M998 483H1019" stroke="#14e824" strokeWidth="2" />
      <path d="M1001 416L1012 428M1001 477L1012 489" stroke="#14e824" />
      <path d="M1029 571.500H1209" stroke="#14e824" strokeWidth="2" />
      <path d="M1021 571.500H1217M1023 578L1033 566M1084 578L1094 566M1144 578L1154 566M1204 578L1214 566" stroke="#14e824" />
      <path d="M1028.500 552V580M1089 552V580M1149 552V580M1209 552V580" stroke="#14e824" strokeWidth="2" />
      <path d="M1089 803V482.500H1028.500V422.500H1209.500V482.500H1148.500V803" fill="none" stroke="#fff" strokeWidth="1.200" />
      <g fill="none" stroke="#e01c1c" strokeWidth="1.200">
        <rect x="1035" y="429.500" width="166" height="46" rx="5" />
        <path d="M1096.500 803V434Q1096.500 430 1101 429.500M1141.500 803V434Q1141.500 430 1137 429.500M1096.500 593Q1097 598 1101 598.500H1137Q1141 598 1141.500 593M1096.500 775Q1097 780 1101 780.500H1137Q1141 780 1141.500 775" />
        <path d="M1044 430L1051 437M1036 438L1044 446M1134 430L1127 438M1141 438L1135 446M1192 430L1186 439M1200 438L1194 446M1104 583L1098 590M1133 583L1140 590M1104 764L1098 771M1133 764L1140 771" />
        {grid([1101, 1137], [531, 591, 651, 712, 772]).map(([x, y]) => <circle key={`${x}-${y}`} cx={x} cy={y} r="2" />)}
      </g>
      <g fill="none" stroke="#c030e0" strokeWidth="1.300">
        {grid([1040, 1101, 1137, 1197], [435, 470]).map(([x, y]) => <circle key={`${x}-${y}`} cx={x} cy={y} r="2.200" />)}
      </g>
      <path d="M1270.500 381V803M1270 442.500H1316M1270 563.500H1316M1270 683.500H1316" stroke="#8c4c4c" fill="none" />
      <g fill="#985050">
        <text x="1292" y="407" fontSize="15">项目</text>
        <text x="1309" y="429" fontSize="11">D</text>
        <text x="1304" y="503" fontSize="15">建</text>
        <text x="1306" y="623" fontSize="15">项</text>
        <text x="1297" y="645" fontSize="11">PRO</text>
        <text x="1304" y="743" fontSize="15">子</text>
        <text x="1280" y="765" fontSize="11">SUB-PR</text>
      </g>
      <g fill="#f4f4f4" fontSize="15" textAnchor="middle">
        <text x="1059" y="555">200</text>
        <text x="1119" y="555">200</text>
        <text x="1180" y="555">200</text>
        <text x="985" y="452" dominantBaseline="central" transform="rotate(-90 985 452)">200</text>
        <text x="985" y="723" dominantBaseline="central" transform="rotate(-90 985 723)">1600</text>
      </g>
      <g fill="#18d828" fontSize="14">
        <text x="961" y="562">00</text>
        <text x="964" y="584">内La</text>
        <text x="959" y="643">内La</text>
        <text x="1159" y="647" fontSize="16">竖筋C8@200</text>
        <text x="1155" y="674" fontSize="16">水平筋C8@200</text>
      </g>
    </svg>
  );
}

const navCell = "flex w-[31px] shrink-0 items-center justify-center border-r border-[#d8d8d8]";
const sideButton = "h-10 w-[44px] bg-[#ff6a10] pl-[6px] text-left text-[14px] leading-[18px] text-white whitespace-nowrap";

function Caret() {
  return <svg viewBox="0 0 8 5" className="mx-[6px] h-[5px] w-2 shrink-0"><path d="M0 0h8L4 5z" fill="#777" /></svg>;
}

function Browser() {
  return (
    <section className="relative flex min-w-0 flex-col overflow-hidden border-l border-[#a0a0a0] bg-[#f1f1f1] text-[#333]">
      <header className="flex h-[53px] shrink-0">
        <svg viewBox="0 0 48 47" className="ml-[10px] h-[47px] w-12 shrink-0">
          <circle cx="24" cy="22" r="24" fill="#2cc068" />
          <path d="M10 34C4 20 14 6 27 7c10 1 14 9 13 16H18c0 7 9 11 19 4-3 11-18 13-25 4-4-6-1-15 5-19-8 4-12 13-7 22zM18 18h13c0-7-12-7-13 0z" fill="#fff" />
        </svg>
        <div className="flex min-w-0 flex-1 flex-col pl-[11px]">
          <div className="flex h-5 shrink-0 items-start justify-between">
            <span className="-mt-[5px] leading-4">360安全浏览器 9.1</span>
            <div className="flex">
              <div className="-mt-[9px] mr-3 flex gap-[14px] leading-4">
                <span>〉</span><span>文件</span><span>查看</span><span>收藏</span><span>工具</span><span>帮助</span>
              </div>
              <div className="flex h-[7px] w-20 rounded-bl border-b border-l border-[#b0b0b0]">
                <button aria-label="皮肤" className="flex w-[27px] items-start justify-center border-r border-[#b0b0b0]"><span className="h-[3px] w-2 bg-[#555]" /></button>
                <button aria-label="最小化" className="flex w-[29px] items-start justify-center border-r border-[#b0b0b0]"><span className="h-0.5 w-3 bg-[#555]" /></button>
                <button aria-label="最大化" className="flex flex-1 items-start justify-center"><span className="h-[3px] w-3 border-x border-b border-[#555]" /></button>
              </div>
            </div>
          </div>
          <div className="flex h-[27px] border border-r-0 border-[#c4c4c4] bg-white">
            <button aria-label="后退" className={navCell}><svg viewBox="0 0 16 16" className="h-4 w-4"><path d="M15 8H2M8 2L2 8l6 6" fill="none" stroke="#90d8a8" strokeWidth="1.600" /></svg></button>
            <button aria-label="刷新" className={navCell}><svg viewBox="0 0 16 16" className="h-4 w-4"><path d="M13 5A6 6 0 1 0 14 9.500M13.500 1v4.500H9" fill="none" stroke="#444" strokeWidth="1.800" /></svg></button>
            <button aria-label="主页" className={navCell}><svg viewBox="0 0 16 16" className="h-4 w-4"><path d="M1 8l7-6.500L15 8h-3v6H4V8z" fill="none" stroke="#444" strokeWidth="1.600" /></svg></button>
            <div className="flex min-w-0 flex-1 items-center overflow-hidden pl-[10px]">
              <svg viewBox="0 0 16 16" className="h-4 w-4 shrink-0"><circle cx="8" cy="8" r="5" fill="#e4f4ff" stroke="#90c8f0" strokeWidth="2" /><circle cx="8" cy="8" r="7" fill="none" stroke="#a8d4f4" strokeWidth="1.500" strokeDasharray="2.500 3" /></svg>
              <a href="http://e.fwxgx.com/question/question_" className="ml-1 font-['Liberation_Mono',monospace] text-[13px] whitespace-nowrap text-[#8c8c8c]">
                http://e.<span className="text-black">fwxgx.com</span>/question/question_
              </a>
            </div>
            <svg viewBox="0 0 36 16" className="mr-[6px] ml-0.5 h-[27px] w-9 shrink-0">
              <circle cx="8" cy="8" r="5" fill="none" stroke="#38b868" strokeWidth="3" strokeDasharray="4 1.200" />
              <path d="M31 1l-6 8h4l-2 6 7-8h-4z" fill="#30c060" />
            </svg>
            <button aria-label="展开" className="flex w-6 shrink-0 items-center justify-center border-x border-[#d8d8d8]"><svg viewBox="0 0 12 8" className="h-2 w-3"><path d="M1 1l5 5 5-5" fill="none" stroke="#444" strokeWidth="1.800" /></svg></button>
            <input aria-label="搜索" placeholder="点此搜索" className="w-[106px] shrink-0 pl-2 text-[14px] outline-none placeholder:text-[#8a8a8a]" />
          </div>
        </div>
      </header>
      <nav className="flex h-[27px] shrink-0 items-center overflow-hidden pl-[10px] whitespace-nowrap">
        <svg viewBox="0 0 16 16" className="h-4 w-4 shrink-0"><path d="M7 1l2 4.500 5 .5-3.500 3.500 1 5L7 12l-4.500 2.500 1-5L0.500 6l4.500-.5z" fill="#fcdc80" stroke="#e8a838" /><path d="M12 9v6M9 12h6" stroke="#38b048" strokeWidth="2" /></svg>
        <a href="#fav" className="w-[27px]">收藏</a>
        <Caret />
        <span className="w-[3px]" />
        <PlusBadge />
        <a href="#nav" className="ml-0.5 w-[57px]">网址大全</a>
        <svg viewBox="0 0 12 14" className="h-[13px] w-3 shrink-0"><path d="M1 1h6l4 4v8H1zM7 1v4h4" fill="#fff" stroke="#999" /></svg>
        <a href="#traffic" className="ml-[3px] w-[62px]">交通违法</a>
        <svg viewBox="0 0 18 16" className="h-4 w-[18px] shrink-0"><path d="M1 9l8-7 8 7M6 9l3-3 3 3" fill="none" stroke="#38a038" strokeWidth="2" /><text x="9" y="16" fontSize="8" fontWeight="700" fill="#d02020" textAnchor="middle" fontFamily='"Liberation Sans", sans-serif'>2345</text></svg>
        <a href="#soft" className="w-[64px]">软件-2345</a>
        <svg viewBox="0 0 16 16" className="h-4 w-4 shrink-0"><circle cx="9" cy="6" r="5" fill="#f8b040" /><path d="M2 14a3 3 0 0 1 2-5 4 4 0 0 1 7 0 2.500 2.500 0 0 1 2 5z" fill="#fff" stroke="#c8d0d8" /></svg>
        <a href="#weather" className="ml-px w-[64px]">佛山天气</a>
        <svg viewBox="0 0 16 16" className="h-4 w-4 shrink-0" fill="#2c68d8"><ellipse cx="2.500" cy="7" rx="1.600" ry="2.200" /><ellipse cx="5.800" cy="3" rx="1.600" ry="2.400" /><ellipse cx="10.200" cy="3" rx="1.600" ry="2.400" /><ellipse cx="13.500" cy="7" rx="1.600" ry="2.200" /><path d="M8 7.500c3 0 5 4 5 5.500s-3 3-5 2c-2 1-5 0-5-2s2-5.500 5-5.500z" /><path d="M5.500 12.500h2M9 11v2.500h2" fill="none" stroke="#fff" /></svg>
        <a href="#docs" className="ml-px w-[52px]">百度文库</a>
        <svg viewBox="0 0 12 10" className="h-[10px] w-3 shrink-0"><path d="M1 1l4 4-4 4M6 1l4 4-4 4" fill="none" stroke="#888" strokeWidth="1.200" /></svg>
        <span className="flex-1" />
        <div className="-mr-1 flex shrink-0 items-center">
          <svg viewBox="0 0 4 14" className="mr-2 h-[14px] w-1"><path d="M2 0v14" stroke="#b0b0b0" strokeWidth="2" strokeDasharray="2 3" /></svg>
          <svg viewBox="0 0 16 16" className="h-4 w-4"><path d="M1 1h6v6H1z" fill="#b8e4f8" stroke="#48a8e0" /><path d="M1 9h6v6H1z" fill="#58c870" stroke="#38a850" /><path d="M9 9h6v6H9z" fill="#f49070" stroke="#e06040" /><path d="M12 0l4 4-4 4-4-4z" fill="#f0b838" /></svg>
          <Caret />
          <svg viewBox="0 0 16 16" className="h-4 w-4"><path d="M1 2l7 1 7-1v11l-7 1-7-1zM8 3v11" fill="#d8f8dc" stroke="#28b848" strokeWidth="1.600" /></svg>
          <svg viewBox="0 0 16 16" className="ml-[5px] h-4 w-4"><rect x="0.500" y="0.500" width="15" height="15" fill="#fbd4d0" stroke="#e08078" /><text x="8" y="11.500" fontSize="9" fill="#d04038" textAnchor="middle" fontFamily='"Liberation Sans", sans-serif'>Aa</text></svg>
          <Caret />
          <svg viewBox="0 0 20 16" className="h-4 w-5"><rect width="20" height="16" rx="2" fill="#f0a030" /><path d="M3 4h5v5H3zM10 11l2-5 2 4 2-4 2 5" fill="none" stroke="#fff" strokeWidth="1.400" /></svg>
        </div>
      </nav>
      <div className="flex h-[33px] shrink-0 items-end gap-0.5 border-b border-[#b4b4b4]">
        <button aria-label="侧栏" className="flex h-7 w-[43px] items-center justify-center pr-1"><svg viewBox="0 0 12 12" className="h-3 w-3"><path d="M7 1L2 6l5 5M10.500 0v12" fill="none" stroke="#555" strokeWidth="1.400" /></svg></button>
        <Tab icon={<PlusBadge />} title="360导航_新一代安全上网导航" />
        <Tab icon={<ESwirl />} title="个人中心_广联达服务新干线" />
        <Tab icon={<ESwirl />} title="陈工您好，之前请假您关于构造柱" active />
        <button aria-label="新标签" className="flex h-[27px] w-6 items-center justify-center"><svg viewBox="0 0 12 12" className="h-3 w-3"><path d="M6 0v12M0 6h12" stroke="#666" strokeWidth="1.600" /></svg></button>
        <button aria-label="窗口" className="flex h-[27px] w-9 items-center justify-center border-l border-[#d4d4d4]"><svg viewBox="0 0 16 14" className="h-[14px] w-4"><path d="M3 10H1V1h11v2M8 13H4V4h11v4M9 10l3 3 3-3" fill="none" stroke="#777" strokeWidth="1.400" /></svg></button>
      </div>
      <div className="flex min-h-0 flex-1">
        <aside className="flex w-10 shrink-0 flex-col items-center border-r border-[#dcdcdc] bg-[#f5f6f6] pt-[21px] pr-[3px]">
          <button aria-label="收藏" className="flex h-7 w-7 items-center justify-center bg-[#fccc30]">
            <svg viewBox="0 0 18 18" className="h-[18px] w-[18px]"><path d="M9 0.500l2.600 5.800 6.200.600-4.700 4.200 1.400 6.200L9 14l-5.500 3.300 1.400-6.200L0.200 6.900l6.200-.6z" fill="#fff" /></svg>
          </button>
          <span className="flex-1" />
          <button aria-label="添加" className="flex h-[29px] w-10 items-center justify-center border-t border-[#dcdcdc]"><svg viewBox="0 0 12 12" className="h-3 w-3"><path d="M6 0v12M0 6h12" stroke="#444" strokeWidth="2.400" /></svg></button>
        </aside>
        <div className="flex min-w-0 flex-1 flex-col bg-white">
          <div className="h-3 shrink-0 border-b border-[#e0e0e0] bg-[#f8f8f8]" />
          <article className="min-h-0 flex-1 overflow-hidden pl-[45px]">
            <p className="pt-[21px] text-[14px] leading-5 text-[#2868b4]">浏览14 次 | 0 回答 | 0 答得好 | 0问得好</p>
            <p className="pt-[17px] pb-px text-[16px] leading-[22px] whitespace-nowrap text-[#333]">然后再请问一下，该构造柱的竖筋和水平筋如何进行设置，感谢您的回答</p>
            <NotesDrawing />
            <DetailDrawing />
          </article>
          <div className="flex h-4 shrink-0 items-center bg-[#f0f0f0]">
            <svg viewBox="0 0 16 8" className="h-2 w-4"><path d="M10 0v8L6 4z" fill="#999" /></svg>
            <span className="h-3 w-[337px] bg-[#c1c1c1]" />
          </div>
          <div className="h-0.5 shrink-0 border-t border-[#c8c8c8] bg-[#f4f4f4]" />
        </div>
      </div>
      <div className="absolute top-[513px] -right-[15px] flex flex-col gap-[10px]">
        <button aria-label="回到顶部" className="h-10 w-[44px] bg-[#bdbdbd]">
          <svg viewBox="0 0 44 40" className="h-10 w-[44px]"><path d="M10 13H33M11 27L21.500 17L32 27" fill="none" stroke="#fff" strokeWidth="2.400" /></svg>
        </button>
        <button className={sideButton}>意见<br />反馈</button>
        <button className={sideButton}>关注<br />我们</button>
        <button className={sideButton}>Q Q<br />咨询</button>
      </div>
    </section>
  );
}

export default function App() {
  return (
    <div className="relative grid h-screen grid-cols-[879fr_670fr] overflow-hidden font-['Liberation_Sans','Noto_Sans_CJK_SC',sans-serif] text-xs text-black">
      <Estimator />
      <Browser />
      <svg viewBox="0 0 1549 821" className="pointer-events-none absolute inset-0 h-full w-full">
        <path d="M849 170L985 735" stroke="#f81010" strokeWidth="2.600" />
        <path d="M845 158L844 175L855 173Z" fill="#f81010" stroke="#f81010" />
      </svg>
    </div>
  );
}
